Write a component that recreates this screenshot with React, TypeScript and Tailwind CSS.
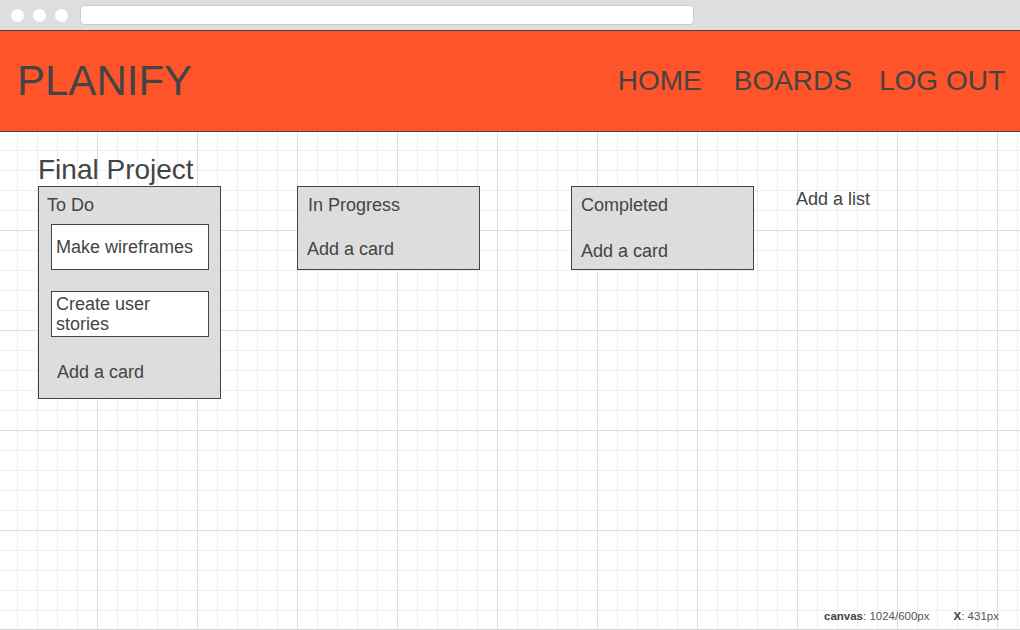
import React from 'react';

type List = {
  title: string;
  cards: string[];
};

const lists: List[] = [
  { title: 'To Do', cards: ['Make wireframes', 'Create user stories'] },
  { title: 'In Progress', cards: [] },
  { title: 'Completed', cards: [] },
];

function BrowserBar() {
  return (
    <div className="h-[30px] bg-[#dedede] flex items-center shrink-0">
      <div className="flex items-center gap-[9px] pl-[11px]">
        <span className="w-[13px] h-[13px] rounded-full bg-white" />
        <span className="w-[13px] h-[13px] rounded-full bg-white" />
        <span className="w-[13px] h-[13px] rounded-full bg-white" />
      </div>
      <div className="ml-[12px] w-[614px] h-[20px] bg-white rounded-[4px] border border-[#cccccc]" />
    </div>
  );
}

function Header() {
  return (
    <header className="h-[102px] shrink-0 bg-[#ff5429] border-y border-[#454545] flex items-center justify-between pl-[17px] pr-[15px] text-[#444444]">
      <h1 className="text-[42px] leading-none font-normal">PLANIFY</h1>
      <nav className="flex items-center text-[28px] leading-none">
        <a className="mr-[32px]">HOME</a>
        <a className="mr-[27px]">BOARDS</a>
        <a>LOG OUT</a>
      </nav>
    </header>
  );
}

export default function App() {
  return (
    <div className="w-[1020px] h-[630px] overflow-hidden relative flex flex-col bg-white text-[#444444] font-['Liberation_Sans',Arial,sans-serif]">
      <BrowserBar />
      <Header />

      {/* board */}
      <main className="flex-1 border-b border-[#d4d4d4] bg-white [background-image:linear-gradient(to_right,#dddddd_1px,transparent_1px),linear-gradient(to_bottom,#dddddd_1px,transparent_1px),linear-gradient(to_right,#eeeeee_1px,transparent_1px),linear-gradient(to_bottom,#eeeeee_1px,transparent_1px)] [background-size:100px_100px,100px_100px,20px_20px,20px_20px] [background-position:-3px_-2px]">
        <div className="pl-[38px] pt-[24px]">
          <h2 className="text-[28px] leading-[28px]">Final Project</h2>
          <div className="mt-[2px] flex items-start">
            {/* To Do */}
            <div className="w-[183px] h-[213px] bg-[#dddddd] border border-[#444444] pt-[8px] pl-[8px]">
              <h3 className="text-[18px] leading-[20px]">{lists[0].title}</h3>
              <div className="mt-[9px] ml-[4px] flex flex-col gap-[21px]">
                {lists[0].cards.map((card) => (
                  <div
                    key={card}
                    className="w-[158px] h-[46px] bg-white border border-[#444444] flex items-center pl-[4px] pr-[2px] text-[18px] leading-[20px]"
                  >
                    {card}
                  </div>
                ))}
              </div>
              <p className="mt-[25px] ml-[10px] text-[18px] leading-[20px]">Add a card</p>
            </div>

            {/* In Progress */}
            <div className="ml-[76px] w-[183px] h-[84px] bg-[#dddddd] border border-[#444444] pt-[8px] pl-[10px]">
              <h3 className="text-[18px] leading-[20px]">{lists[1].title}</h3>
              <p className="mt-[24px] -ml-[1px] text-[18px] leading-[20px]">Add a card</p>
            </div>

            {/* Completed */}
            <div className="ml-[91px] w-[183px] h-[84px] bg-[#dddddd] border border-[#444444] pt-[8px] pl-[9px]">
              <h3 className="text-[18px] leading-[20px]">{lists[2].title}</h3>
              <p className="mt-[26px] text-[18px] leading-[20px]">Add a card</p>
            </div>

            <p className="ml-[42px] mt-[3px] text-[18px] leading-[20px]">Add a list</p>
          </div>
        </div>
      </main>

      {/* status readout */}
      <div className="absolute left-[824px] bottom-[8px] flex items-center text-[11.5px] leading-none text-[#555555] whitespace-nowrap">
        <span>
          <b className="font-bold text-[#444444]">canvas</b>: 1024/600px
        </span>
        <span className="ml-[24px]">
          <b className="font-bold text-[#444444]">X</b>: 431px
        </span>
      </div>
    </div>
  );
}
